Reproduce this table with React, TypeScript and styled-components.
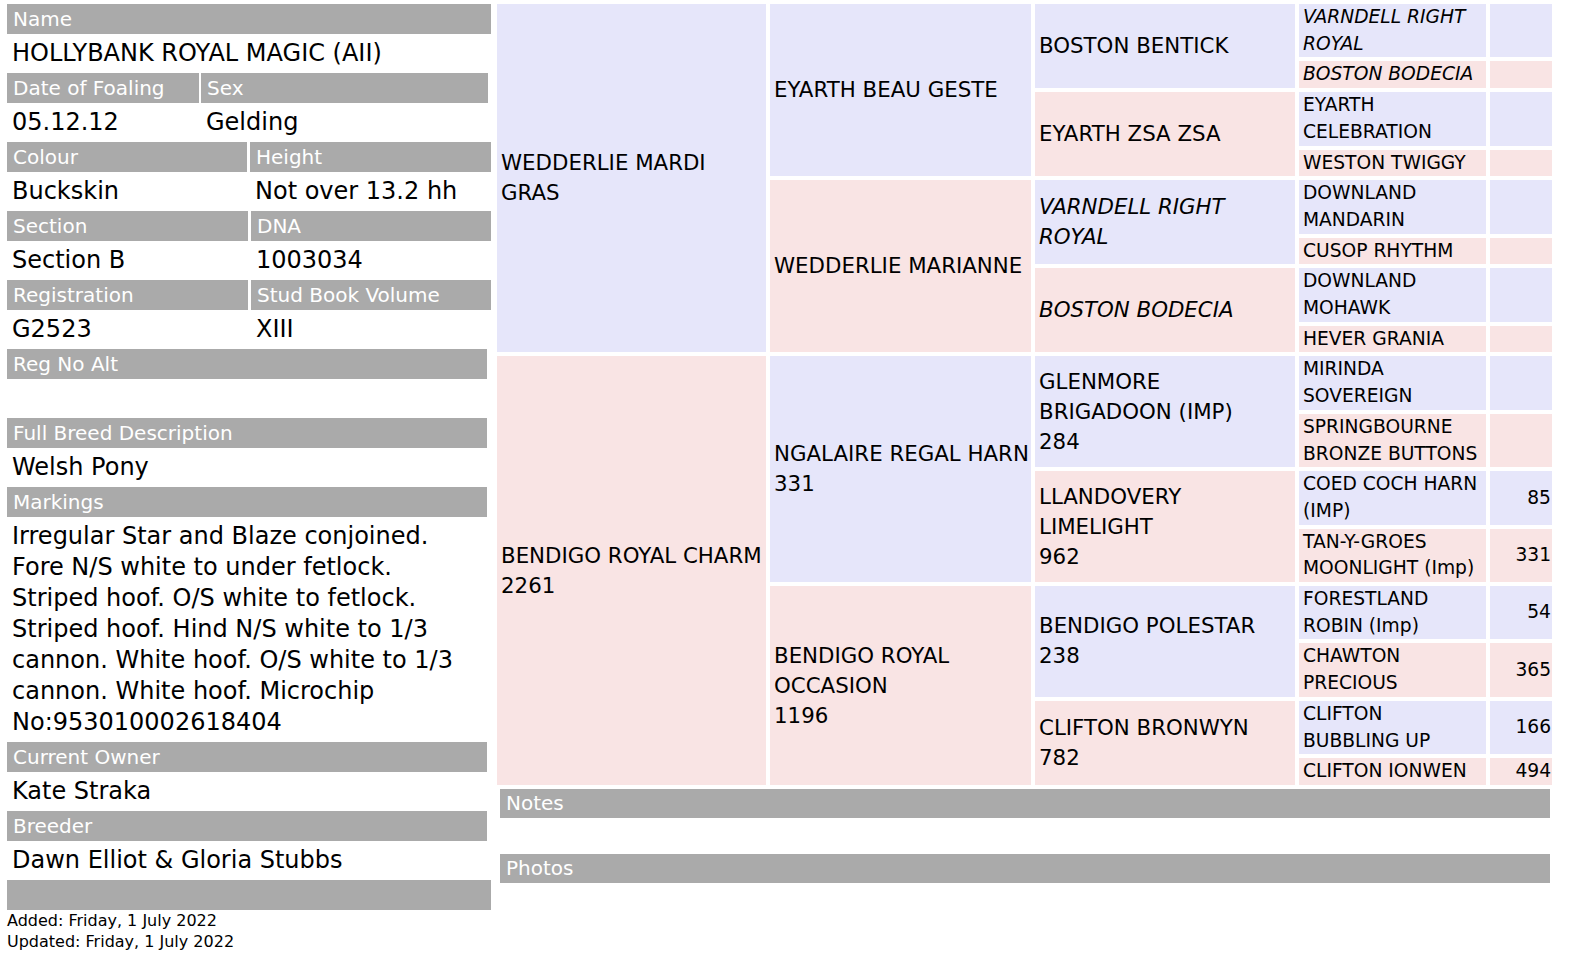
import React from "react";
import styled, { createGlobalStyle } from "styled-components";

const GlobalStyle = createGlobalStyle`
  html, body {
    margin: 0;
    padding: 0;
    background: #ffffff;
  }
  body {
    font-family: "DejaVu Sans", Verdana, sans-serif;
    color: #000000;
  }
`;

const LAVENDER = "#e6e6fa";
const PINK = "#f9e4e4";
const GREY = "#aaaaaa";

const Page = styled.div`
  display: flex;
  align-items: flex-start;
  gap: 6px;
  padding: 4px 0 0 7px;
`;

const LeftPanel = styled.div`
  width: 484px;
  display: flex;
  flex-direction: column;
`;

const Label = styled.div<{ $narrow?: boolean }>`
  box-sizing: border-box;
  width: ${(p) => (p.$narrow ? "480px" : "100%")};
  height: 30px;
  line-height: 30px;
  padding: 0 6px;
  background: ${GREY};
  color: #ffffff;
  font-size: 20px;
  white-space: nowrap;
`;

const Value = styled.div`
  box-sizing: border-box;
  min-height: 39px;
  padding: 4px 5px;
  font-size: 24px;
  line-height: 31px;
`;

const Line = styled.span`
  display: block;
  white-space: nowrap;
`;

const PairGrid = styled.div<{ $cols: string; $gap: number }>`
  display: grid;
  grid-template-columns: ${(p) => p.$cols};
  column-gap: ${(p) => p.$gap}px;
`;

const FooterText = styled.div`
  font-size: 16px;
  line-height: 21px;
`;

const RightPanel = styled.div`
  width: 1056px;
  display: flex;
  flex-direction: column;
`;

const Pedigree = styled.div`
  display: grid;
  grid-template-columns: 269px 261px 260px 187px 62px;
  grid-auto-rows: auto;
  gap: 4px;
`;

const Cell = styled.div<{
  $col: number;
  $row: number;
  $span: number;
  $dam: boolean;
  $small: boolean;
  $italic?: boolean;
  $num?: boolean;
}>`
  grid-column: ${(p) => p.$col};
  grid-row: ${(p) => p.$row} / span ${(p) => p.$span};
  display: flex;
  flex-direction: column;
  justify-content: center;
  align-items: ${(p) => (p.$num ? "flex-end" : "flex-start")};
  background: ${(p) => (p.$dam ? PINK : LAVENDER)};
  padding: ${(p) => (p.$num ? "0 1px 0 0" : "0 0 0 4px")};
  font-size: ${(p) => (p.$small ? "18.67px" : "21.33px")};
  line-height: ${(p) => (p.$small ? "26.7px" : "30px")};
  font-style: ${(p) => (p.$italic ? "italic" : "normal")};
  min-width: 0;
  min-height: ${(p) => (p.$small ? "26.7px" : "0")};
`;

const Section = styled.div`
  display: flex;
  flex-direction: column;
  padding: 0 3px;
  margin-top: 4px;
`;

const SectionBar = styled.div`
  height: 29px;
  line-height: 29px;
  padding: 0 6px;
  background: ${GREY};
  color: #ffffff;
  font-size: 20px;
`;

const SectionBody = styled.div`
  height: 36px;
`;

type Horse = { lines: string[]; italic?: boolean };

const gen1: Horse[] = [
  { lines: ["WEDDERLIE MARDI", "GRAS"] },
  { lines: ["BENDIGO ROYAL CHARM", "2261"] },
];
const gen2: Horse[] = [
  { lines: ["EYARTH BEAU GESTE"] },
  { lines: ["WEDDERLIE MARIANNE"] },
  { lines: ["NGALAIRE REGAL HARN", "331"] },
  { lines: ["BENDIGO ROYAL", "OCCASION", "1196"] },
];
const gen3: Horse[] = [
  { lines: ["BOSTON BENTICK"] },
  { lines: ["EYARTH ZSA ZSA"] },
  { lines: ["VARNDELL RIGHT", "ROYAL"], italic: true },
  { lines: ["BOSTON BODECIA"], italic: true },
  { lines: ["GLENMORE", "BRIGADOON (IMP)", "284"] },
  { lines: ["LLANDOVERY", "LIMELIGHT", "962"] },
  { lines: ["BENDIGO POLESTAR", "238"] },
  { lines: ["CLIFTON BRONWYN", "782"] },
];
const gen4: Horse[] = [
  { lines: ["VARNDELL RIGHT", "ROYAL"], italic: true },
  { lines: ["BOSTON BODECIA"], italic: true },
  { lines: ["EYARTH", "CELEBRATION"] },
  { lines: ["WESTON TWIGGY"] },
  { lines: ["DOWNLAND", "MANDARIN"] },
  { lines: ["CUSOP RHYTHM"] },
  { lines: ["DOWNLAND", "MOHAWK"] },
  { lines: ["HEVER GRANIA"] },
  { lines: ["MIRINDA", "SOVEREIGN"] },
  { lines: ["SPRINGBOURNE", "BRONZE BUTTONS"] },
  { lines: ["COED COCH HARN", "(IMP)"] },
  { lines: ["TAN-Y-GROES", "MOONLIGHT (Imp)"] },
  { lines: ["FORESTLAND", "ROBIN (Imp)"] },
  { lines: ["CHAWTON", "PRECIOUS"] },
  { lines: ["CLIFTON", "BUBBLING UP"] },
  { lines: ["CLIFTON IONWEN"] },
];
const gen5 = ["", "", "", "", "", "", "", "", "", "", "85", "331", "54", "365", "166", "494"];

const generations = [gen1, gen2, gen3, gen4];

const markings = [
  "Irregular Star and Blaze conjoined.",
  "Fore N/S white to under fetlock.",
  "Striped hoof. O/S white to fetlock.",
  "Striped hoof. Hind N/S white to 1/3",
  "cannon. White hoof. O/S white to 1/3",
  "cannon. White hoof. Microchip",
  "No:953010002618404",
];

export default function App() {
  return (
    <>
      <GlobalStyle />
      <Page>
        <LeftPanel>
          <Label>Name</Label>
          <Value>HOLLYBANK ROYAL MAGIC (AII)</Value>

          <PairGrid $cols="192px 287px" $gap={2}>
            <Label>Date of Foaling</Label>
            <Label>Sex</Label>
            <Value>05.12.12</Value>
            <Value>Gelding</Value>
          </PairGrid>

          <PairGrid $cols="240px 241px" $gap={3}>
            <Label>Colour</Label>
            <Label>Height</Label>
            <Value>Buckskin</Value>
            <Value>Not over 13.2 hh</Value>
          </PairGrid>

          <PairGrid $cols="241px 240px" $gap={3}>
            <Label>Section</Label>
            <Label>DNA</Label>
            <Value>Section B</Value>
            <Value>1003034</Value>
          </PairGrid>

          <PairGrid $cols="241px 240px" $gap={3}>
            <Label>Registration</Label>
            <Label>Stud Book Volume</Label>
            <Value>G2523</Value>
            <Value>XIII</Value>
          </PairGrid>

          <Label $narrow>Reg No Alt</Label>
          <Value />

          <Label $narrow>Full Breed Description</Label>
          <Value>Welsh Pony</Value>

          <Label $narrow>Markings</Label>
          <Value>
            {markings.map((m) => (
              <Line key={m}>{m}</Line>
            ))}
          </Value>

          <Label $narrow>Current Owner</Label>
          <Value>Kate Straka</Value>

          <Label $narrow>Breeder</Label>
          <Value>Dawn Elliot &amp; Gloria Stubbs</Value>

          <Label />
          <FooterText>
            Added: Friday, 1 July 2022
            <br />
            Updated: Friday, 1 July 2022
          </FooterText>
        </LeftPanel>

        <RightPanel>
          <Pedigree>
            {generations.map((gen, g) => {
              const span = 16 / gen.length;
              return gen.map((h, i) => (
                <Cell
                  key={`g${g}-${i}`}
                  $col={g + 1}
                  $row={i * span + 1}
                  $span={span}
                  $dam={i % 2 === 1}
                  $small={g === 3}
                  $italic={h.italic}
                >
                  {h.lines.map((l) => (
                    <Line key={l}>{l}</Line>
                  ))}
                </Cell>
              ));
            })}
            {gen5.map((n, i) => (
              <Cell
                key={`g5-${i}`}
                $col={5}
                $row={i + 1}
                $span={1}
                $dam={i % 2 === 1}
                $small
                $num
              >
                {n && <Line>{n}</Line>}
              </Cell>
            ))}
          </Pedigree>

          <Section>
            <SectionBar>Notes</SectionBar>
            <SectionBody />
            <SectionBar>Photos</SectionBar>
          </Section>
        </RightPanel>
      </Page>
    </>
  );
}
